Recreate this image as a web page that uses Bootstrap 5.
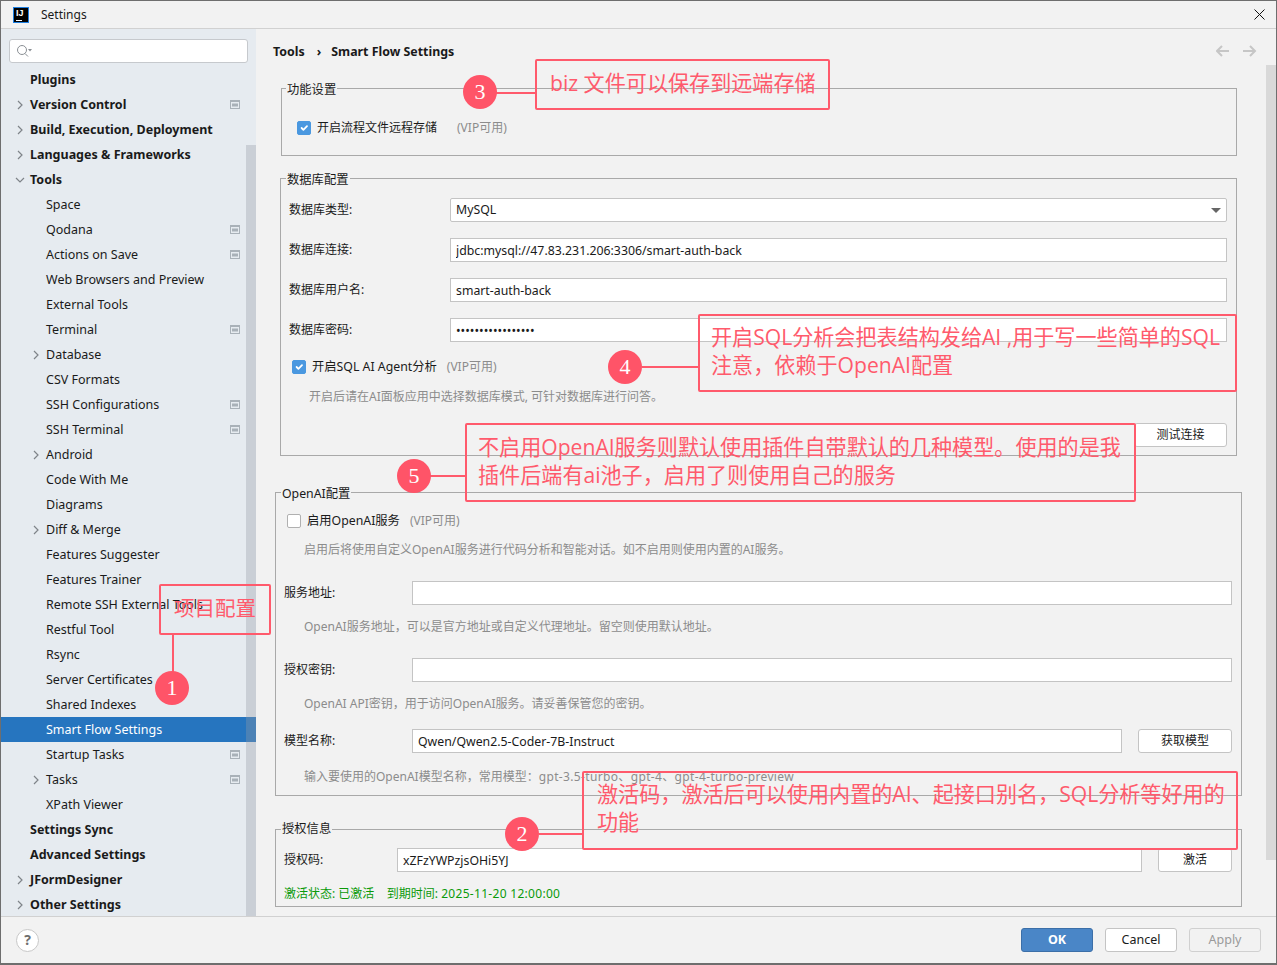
<!DOCTYPE html>
<html lang="en">

<head>
    <meta charset="UTF-8" />
    <meta name="viewport" content="width=device-width, initial-scale=1.0" />
    <title>Settings</title>
    <link href="https://cdn.jsdelivr.net/npm/bootstrap@5.3.0/dist/css/bootstrap.min.css" rel="stylesheet" />
    <style>
        html, body { height: 100%; overflow: hidden; }
        body { font-family: "Noto Sans", "Noto Sans CJK SC", sans-serif; font-size: 12.5px; color: #1a1a1a; background: #f2f2f2; }
        .app-window { position: relative; width: 1277px; height: 965px; border: 1px solid #6e6e6e; border-bottom-width: 2px; }
        .flex-none { flex: none; }
        .body-split { min-height: 0; }

        .title-bar { height: 28px; border-bottom: 1px solid #d1d1d1; padding-left: 12px; font-size: 12px; }
        .ij-logo { width: 16px; height: 16px; background: #000; outline: 1px solid #1e7fe0; outline-offset: -1px; color: #fff; font-family: "Liberation Sans", sans-serif; font-size: 9px; font-weight: 700; line-height: 10px; padding: 1px 0 0 3px; margin-right: 12px; position: relative; }
        .ij-logo::after { content: ""; position: absolute; left: 3px; bottom: 2px; width: 6px; height: 1px; background: #fff; }
        .close-btn { width: 34px; }

        .side-pane { width: 255px; background: #e6ebf0; position: relative; overflow: hidden; }
        .search-box { margin: 10px 8px 4px 8px; height: 24px; background: #fff; border: 1px solid #c6c9cd; border-radius: 3px; padding-left: 6px; }
        .tree-row { height: 25px; padding: 2px 0 0 29px; position: relative; white-space: nowrap; }
        .tree-row.kid { padding-left: 45px; }
        .tree-row.top { font-weight: 700; }
        .tree-row.active-row { background: #2675bf; color: #fff; }
        .tree-arrow { position: absolute; left: 14px; top: 8px; }
        .kid .tree-arrow { left: 30px; }
        .tree-badge { position: absolute; left: 229px; top: 8px; }
        .side-thumb { position: absolute; left: 245px; top: 116px; bottom: 0; width: 10px; background: rgba(150, 155, 165, .35); }

        .main-pane { background: #f2f2f2; position: relative; overflow: hidden; }
        .crumbs { height: 48px; padding: 14px 0 0 17px; font-weight: 700; font-size: 12.4px; }
        .crumb-sep { margin: 0 10px 0 12px; }
        .nav-arrows { position: absolute; left: 960px; top: 15px; }
        .main-thumb { position: absolute; left: 1010px; top: 36px; width: 10px; height: 795px; background: #d9d9d9; }

        fieldset.set-box { border: 1px solid #a9a9a9; min-width: 0; }
        fieldset.set-box legend { float: none; width: auto; font-size: 12.3px; line-height: 18px; padding: 4px 1px 0; }
        .box-a { margin: 0 39px 0 25px; height: 79px; padding: 20px 0 0 15px; }
        .box-a legend { margin: 0 0 0 -11px; }
        .box-b { margin: 11px 39px 0 24px; height: 289px; padding: 9px 9px 0 8px; }
        .box-b legend { margin: 0 0 0 -3px; }
        .box-c { margin: 25px 34px 0 19px; height: 315px; padding: 9px 9px 0 8px; }
        .box-d { margin: 24px 34px 0 19px; height: 87px; padding: 10px 9px 0 8px; }
        .box-c legend { margin: 0 0 0 -3px; }
        fieldset.box-d legend { margin: 0 0 0 -3px; padding-top: 0; }

        .set-label { font-size: 12px; flex: none; }
        .box-b .set-label { width: 161px; }
        .box-c .set-label { width: 128px; }
        .box-d .set-label { width: 113px; }
        .field-row { height: 24px; }
        .box-b .field-row + .field-row { margin-top: 16px; }
        .fld.form-control, .fld.form-select { height: 24px; min-height: 0; padding: 0 5px; font-size: 12.3px; color: #1a1a1a; border: 1px solid #c4c4c4; border-radius: 0; background-color: #fff; box-shadow: none; }
        .fld.form-select { border-radius: 2px; background-size: 10px 5px; background-position: right 5px center; background-image: url("data:image/svg+xml,%3csvg xmlns='http://www.w3.org/2000/svg' viewBox='0 0 10 5'%3e%3cpath fill='%23666' d='M0 0h10L5 5z'/%3e%3c/svg%3e"); }
        .flat-btn { height: 24px; padding: 0; font-size: 12px; color: #1a1a1a; background: #fff; border: 1px solid #c4c4c4; border-radius: 3px; flex: none; }
        .chk.form-check-input { width: 14px; height: 14px; margin: 0; flex: none; border-radius: 2px; border-color: #b0b0b0; }
        .chk.form-check-input:checked { background-color: #4a98e0; border-color: #4a98e0; }
        .chk-text { font-size: 12.3px; margin-left: 6px; }
        .box-a .chk-text { font-size: 12px; }
        .vip-tag { font-size: 12px; color: #8c8c8c; }
        .vip-a { margin-left: 20px; }
        .vip-b { margin-left: 10px; }
        .help-text { font-size: 12px; color: #8c8c8c; white-space: nowrap; }
        .latin-wide { letter-spacing: .35px; }
        .status-ok { font-size: 12px; color: #0a9a0a; }
        .status-ok .latin-wide { letter-spacing: .3px; }

        .chk-gap-b { margin: 16px 0 0 3px; }
        .help-gap-b { margin: 12px 0 0 20px; }
        .btn-gap-b { margin-top: 17px; }
        .test-btn { width: 93px; }
        .side-btn { width: 94px; margin-left: 16px; }
        .box-d .side-btn { width: 74px; }
        .help-in { margin: 11px 0 0 20px; }
        .chk-gap-c { margin: 0 0 0 3px; }
        .mt-row { margin-top: 22px; }
        .mt-row2 { margin-top: 22px; }
        .mt-row3 { margin-top: 16px; }
        .help-under { margin-top: 13px; }
        .help-last { margin-top: 15px; }
        .status-gap { margin-top: 13px; }

        .foot-bar { height: 47px; border-top: 1px solid #d1d1d1; background: #f2f2f2; padding: 0 15px; }
        .help-dot { width: 23px; height: 23px; border: 1px solid #c8c8c8; border-radius: 50%; background: #fff; font-size: 14px; font-weight: 700; color: #6e6e6e; line-height: 20px; text-align: center; }
        .dlg-btn { width: 72px; height: 24px; padding: 0; font-size: 12.5px; border-radius: 3px; line-height: 1; }
        .dlg-ok, .dlg-ok:hover { background: #4a86c7; border: 1px solid #3c6fa8; color: #fff; font-weight: 700; }
        .dlg-plain, .dlg-plain:hover { background: #fff; border: 1px solid #c4c4c4; color: #1a1a1a; }
        .dlg-btn.dlg-off:disabled { background: #f2f2f2; border: 1px solid #d0d0d0; color: #9a9a9a; opacity: 1; }

        .note-box { position: absolute; border: 2px solid #ff5a6c; border-radius: 2px; color: #ff5a6c; font-size: 21.1px; line-height: 28px; padding: 7px 11px; font-family: "Open Sans", "Noto Sans CJK SC", sans-serif; white-space: nowrap; }
        .note-dot { position: absolute; width: 34px; height: 34px; border-radius: 50%; background: #ff5468; color: #fff; font-family: "Liberation Serif", serif; font-size: 22px; line-height: 34px; text-align: center; }
        .note-line { position: absolute; background: #ff5a6c; height: 2px; }
        .box-1 { left: 158px; top: 583px; width: 112px; height: 51px; padding: 8px 13px; font-size: 20.5px; }
        .line-1 { left: 171px; top: 633px; width: 2px; height: 40px; }
        .dot-1 { left: 154px; top: 670px; }
        .box-2 { left: 581px; top: 770px; width: 656px; height: 79px; padding-left: 13px; }
        .line-2 { left: 538px; top: 832px; width: 44px; }
        .dot-2 { left: 504px; top: 816px; }
        .box-3 { left: 534px; top: 58px; width: 295px; height: 51px; padding: 8px 13px; }
        .line-3 { left: 495px; top: 91px; width: 40px; }
        .dot-3 { left: 462px; top: 74px; }
        .box-4 { left: 697px; top: 313px; width: 539px; height: 78px; }
        .line-4 { left: 641px; top: 365px; width: 57px; }
        .dot-4 { left: 607px; top: 349px; }
        .box-5 { left: 464px; top: 422px; width: 671px; height: 79px; padding-top: 8px; }
        .line-5 { left: 429px; top: 474px; width: 36px; }
        .dot-5 { left: 396px; top: 458px; }
    </style>
</head>

<body>
    <svg width="0" height="0" class="position-absolute">
        <symbol id="arrowRight" viewBox="0 0 10 10"><path d="M3 1l4 4-4 4" fill="none" stroke="#7f8489" stroke-width="1.2" /></symbol>
        <symbol id="arrowDown" viewBox="0 0 10 10"><path d="M1 3l4 4 4-4" fill="none" stroke="#7f8489" stroke-width="1.2" /></symbol>
        <symbol id="projIcon" viewBox="0 0 10 9"><path d="M0 0h10v9H0z" fill="#a9b1b8" /><path d="M1 2h8v6H1z" fill="#e6ebf0" /><path d="M2 3.500h6v3H2z" fill="#a9b1b8" /></symbol>
    </svg>

    <div class="app-window d-flex flex-column">
        <!-- Title bar -->
        <div class="title-bar d-flex align-items-center flex-none">
            <div class="ij-logo">IJ</div>
            <span>Settings</span>
            <div class="close-btn ms-auto d-flex justify-content-center">
                <svg width="11" height="11" viewBox="0 0 11 11"><path d="M.5.5l10 10M10.500.5l-10 10" stroke="#111" fill="none" /></svg>
            </div>
        </div>

        <div class="d-flex flex-grow-1 body-split">
            <!-- Settings tree -->
            <div class="side-pane flex-none">
                <div class="search-box d-flex align-items-center">
                    <svg width="16" height="14" viewBox="0 0 16 14"><circle cx="6" cy="6" r="4.500" fill="none" stroke="#8a8f94" /><path d="M9 9.500l3 3" stroke="#8a8f94" /><path d="M12 5h4l-2 2.500z" fill="#8a8f94" /></svg>
                </div>
                <div class="tree-row top d-flex align-items-center">Plugins</div>
                <div class="tree-row top d-flex align-items-center"><svg class="tree-arrow" width="10" height="10"><use href="#arrowRight" /></svg>Version Control<svg class="tree-badge" width="10" height="9"><use href="#projIcon" /></svg></div>
                <div class="tree-row top d-flex align-items-center"><svg class="tree-arrow" width="10" height="10"><use href="#arrowRight" /></svg>Build, Execution, Deployment</div>
                <div class="tree-row top d-flex align-items-center"><svg class="tree-arrow" width="10" height="10"><use href="#arrowRight" /></svg>Languages &amp; Frameworks</div>
                <div class="tree-row top d-flex align-items-center"><svg class="tree-arrow" width="10" height="10"><use href="#arrowDown" /></svg>Tools</div>
                <div class="tree-row kid d-flex align-items-center">Space</div>
                <div class="tree-row kid d-flex align-items-center">Qodana<svg class="tree-badge" width="10" height="9"><use href="#projIcon" /></svg></div>
                <div class="tree-row kid d-flex align-items-center">Actions on Save<svg class="tree-badge" width="10" height="9"><use href="#projIcon" /></svg></div>
                <div class="tree-row kid d-flex align-items-center">Web Browsers and Preview</div>
                <div class="tree-row kid d-flex align-items-center">External Tools</div>
                <div class="tree-row kid d-flex align-items-center">Terminal<svg class="tree-badge" width="10" height="9"><use href="#projIcon" /></svg></div>
                <div class="tree-row kid d-flex align-items-center"><svg class="tree-arrow" width="10" height="10"><use href="#arrowRight" /></svg>Database</div>
                <div class="tree-row kid d-flex align-items-center">CSV Formats</div>
                <div class="tree-row kid d-flex align-items-center">SSH Configurations<svg class="tree-badge" width="10" height="9"><use href="#projIcon" /></svg></div>
                <div class="tree-row kid d-flex align-items-center">SSH Terminal<svg class="tree-badge" width="10" height="9"><use href="#projIcon" /></svg></div>
                <div class="tree-row kid d-flex align-items-center"><svg class="tree-arrow" width="10" height="10"><use href="#arrowRight" /></svg>Android</div>
                <div class="tree-row kid d-flex align-items-center">Code With Me</div>
                <div class="tree-row kid d-flex align-items-center">Diagrams</div>
                <div class="tree-row kid d-flex align-items-center"><svg class="tree-arrow" width="10" height="10"><use href="#arrowRight" /></svg>Diff &amp; Merge</div>
                <div class="tree-row kid d-flex align-items-center">Features Suggester</div>
                <div class="tree-row kid d-flex align-items-center">Features Trainer</div>
                <div class="tree-row kid d-flex align-items-center">Remote SSH External Tools</div>
                <div class="tree-row kid d-flex align-items-center">Restful Tool</div>
                <div class="tree-row kid d-flex align-items-center">Rsync</div>
                <div class="tree-row kid d-flex align-items-center">Server Certificates</div>
                <div class="tree-row kid d-flex align-items-center">Shared Indexes</div>
                <div class="tree-row kid active-row d-flex align-items-center">Smart Flow Settings</div>
                <div class="tree-row kid d-flex align-items-center">Startup Tasks<svg class="tree-badge" width="10" height="9"><use href="#projIcon" /></svg></div>
                <div class="tree-row kid d-flex align-items-center"><svg class="tree-arrow" width="10" height="10"><use href="#arrowRight" /></svg>Tasks<svg class="tree-badge" width="10" height="9"><use href="#projIcon" /></svg></div>
                <div class="tree-row kid d-flex align-items-center">XPath Viewer</div>
                <div class="tree-row top d-flex align-items-center">Settings Sync</div>
                <div class="tree-row top d-flex align-items-center">Advanced Settings</div>
                <div class="tree-row top d-flex align-items-center"><svg class="tree-arrow" width="10" height="10"><use href="#arrowRight" /></svg>JFormDesigner</div>
                <div class="tree-row top d-flex align-items-center"><svg class="tree-arrow" width="10" height="10"><use href="#arrowRight" /></svg>Other Settings</div>
                <div class="side-thumb"></div>
            </div>

            <!-- Settings page -->
            <div class="main-pane flex-grow-1">
                <div class="crumbs">Tools<span class="crumb-sep">›</span>Smart Flow Settings</div>
                <svg class="nav-arrows" width="42" height="14" viewBox="0 0 42 14">
                    <path d="M1 7h12M6 2L1 7l5 5" fill="none" stroke="#c6c6c6" stroke-width="2" />
                    <path d="M27 7h12M34 2l5 5-5 5" fill="none" stroke="#c6c6c6" stroke-width="2" />
                </svg>
                <div class="main-thumb"></div>

                <fieldset class="set-box box-a">
                    <legend>功能设置</legend>
                    <div class="d-flex align-items-center">
                        <input class="form-check-input chk" type="checkbox" checked />
                        <span class="chk-text">开启流程文件远程存储</span>
                        <span class="vip-tag vip-a">(VIP可用)</span>
                    </div>
                </fieldset>

                <fieldset class="set-box box-b">
                    <legend>数据库配置</legend>
                    <div class="field-row d-flex align-items-center">
                        <span class="set-label">数据库类型:</span>
                        <select class="form-select fld"><option>MySQL</option></select>
                    </div>
                    <div class="field-row d-flex align-items-center">
                        <span class="set-label">数据库连接:</span>
                        <input class="form-control fld" value="jdbc:mysql://47.83.231.206:3306/smart-auth-back" />
                    </div>
                    <div class="field-row d-flex align-items-center">
                        <span class="set-label">数据库用户名:</span>
                        <input class="form-control fld" value="smart-auth-back" />
                    </div>
                    <div class="field-row d-flex align-items-center">
                        <span class="set-label">数据库密码:</span>
                        <input class="form-control fld" type="password" value="smartauthback2025" />
                    </div>
                    <div class="d-flex align-items-center chk-gap-b">
                        <input class="form-check-input chk" type="checkbox" checked />
                        <span class="chk-text">开启SQL AI Agent分析</span>
                        <span class="vip-tag vip-b">(VIP可用)</span>
                    </div>
                    <div class="help-text help-gap-b">开启后请在AI面板应用中选择数据库模式, 可针对数据库进行问答。</div>
                    <div class="d-flex justify-content-end btn-gap-b">
                        <button class="btn flat-btn test-btn">测试连接</button>
                    </div>
                </fieldset>

                <fieldset class="set-box box-c">
                    <legend>OpenAI配置</legend>
                    <div class="d-flex align-items-center chk-gap-c">
                        <input class="form-check-input chk" type="checkbox" />
                        <span class="chk-text">启用OpenAI服务</span>
                        <span class="vip-tag vip-b">(VIP可用)</span>
                    </div>
                    <div class="help-text help-in">启用后将使用自定义OpenAI服务进行代码分析和智能对话。如不启用则使用内置的AI服务。</div>
                    <div class="field-row d-flex align-items-center mt-row">
                        <span class="set-label">服务地址:</span>
                        <input class="form-control fld" />
                    </div>
                    <div class="help-text help-in help-under">OpenAI服务地址，可以是官方地址或自定义代理地址。留空则使用默认地址。</div>
                    <div class="field-row d-flex align-items-center mt-row2">
                        <span class="set-label">授权密钥:</span>
                        <input class="form-control fld" />
                    </div>
                    <div class="help-text help-in help-under">OpenAI API密钥，用于访问OpenAI服务。请妥善保管您的密钥。</div>
                    <div class="field-row d-flex align-items-center mt-row3">
                        <span class="set-label">模型名称:</span>
                        <input class="form-control fld" value="Qwen/Qwen2.5-Coder-7B-Instruct" />
                        <button class="btn flat-btn side-btn">获取模型</button>
                    </div>
                    <div class="help-text help-in help-last">输入要使用的OpenAI模型名称，常用模型：<span class="latin-wide">gpt-3.5-turbo、gpt-4、gpt-4-turbo-preview</span></div>
                </fieldset>

                <fieldset class="set-box box-d">
                    <legend>授权信息</legend>
                    <div class="field-row d-flex align-items-center">
                        <span class="set-label">授权码:</span>
                        <input class="form-control fld" value="xZFzYWPzjsOHi5YJ" />
                        <button class="btn flat-btn side-btn">激活</button>
                    </div>
                    <div class="status-ok status-gap">激活状态: 已激活&nbsp;&nbsp;&nbsp;&nbsp;到期时间: <span class="latin-wide">2025-11-20 12:00:00</span></div>
                </fieldset>
            </div>
        </div>

        <!-- Dialog buttons -->
        <div class="foot-bar d-flex align-items-center flex-none">
            <div class="help-dot">?</div>
            <div class="ms-auto d-flex gap-2">
                <button class="btn dlg-btn dlg-ok me-1">OK</button>
                <button class="btn dlg-btn dlg-plain me-1">Cancel</button>
                <button class="btn dlg-btn dlg-off" disabled>Apply</button>
            </div>
        </div>

        <!-- Annotations drawn over the screenshot -->
        <div class="note-box box-1">项目配置</div>
        <div class="note-line line-1"></div>
        <div class="note-dot dot-1">1</div>

        <div class="note-box box-2">激活码，激活后可以使用内置的AI、起接口别名，SQL分析等好用的<br />功能</div>
        <div class="note-line line-2"></div>
        <div class="note-dot dot-2">2</div>

        <div class="note-box box-3">biz 文件可以保存到远端存储</div>
        <div class="note-line line-3"></div>
        <div class="note-dot dot-3">3</div>

        <div class="note-box box-4">开启SQL分析会把表结构发给AI ,用于写一些简单的SQL<br />注意，依赖于OpenAI配置</div>
        <div class="note-line line-4"></div>
        <div class="note-dot dot-4">4</div>

        <div class="note-box box-5">不启用OpenAI服务则默认使用插件自带默认的几种模型。使用的是我<br />插件后端有ai池子，启用了则使用自己的服务</div>
        <div class="note-line line-5"></div>
        <div class="note-dot dot-5">5</div>
    </div>

    <script src="https://cdn.jsdelivr.net/npm/bootstrap@5.3.0/dist/js/bootstrap.bundle.min.js"></script>
</body>

</html>
